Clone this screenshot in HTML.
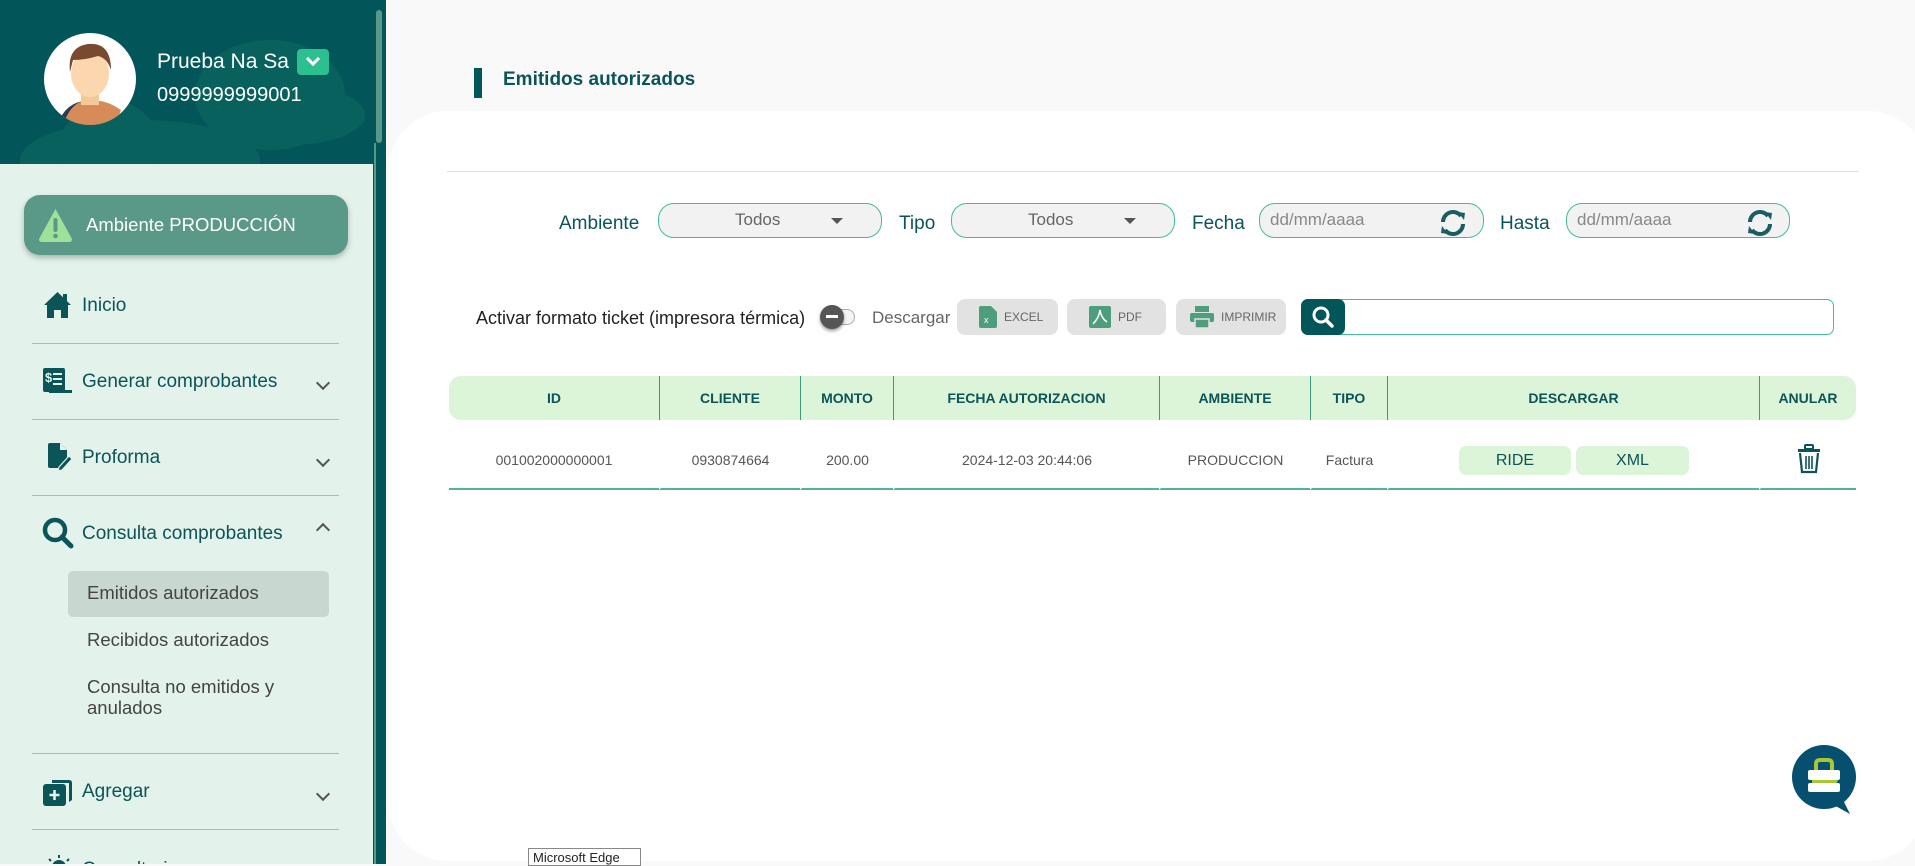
<!DOCTYPE html>
<html><head><meta charset="utf-8"><style>
*{box-sizing:border-box;margin:0;padding:0}
body{width:1915px;height:864px;overflow:hidden;background:#f9f9f9;font-family:"Liberation Sans",sans-serif;position:relative}
.a{position:absolute}
#side{left:0;top:0;width:373px;height:864px;background:#e3f2eb;overflow:hidden}
#head{left:0;top:0;width:373px;height:164px;background:#02565a;overflow:hidden}
.nav{position:absolute;left:82px;font-size:19px;color:#0b5458}
.div{position:absolute;left:32px;width:307px;height:1px;background:#9fc2b5}
.chev{position:absolute;left:318px;width:10px;height:10px;border-right:2px solid #555;border-bottom:2px solid #555;transform:rotate(45deg)}
.sub{position:absolute;left:87px;font-size:18.5px;color:#444}
.lbl{position:absolute;font-size:19px;color:#0b5458;top:213px}
.sel{position:absolute;top:203px;height:35px;border:1px solid #3fbf91;border-radius:16px;background:#f2f2f2;font-size:17px;color:#666}
.btn{position:absolute;top:299px;height:36px;background:#e2e2e2;border-radius:8px;font-size:12px;color:#666;display:flex;align-items:center;gap:7px;padding-left:22px}
th{background:#dcf5d8;color:#0b5458;font-size:14px;font-weight:bold;height:44px;border-left:1px solid #3f9a7d}
td{font-size:14px;color:#555;text-align:center;height:70px;padding-top:12px;border-bottom:2px solid #4fb68f;border-left:2px solid #fff}
</style></head><body>
<div id="side" class="a">
 <div id="head" class="a">
  <svg class="a" style="left:0;top:0" width="373" height="164"><g fill="#0f6a60" opacity=".55"><ellipse cx="140" cy="160" rx="120" ry="40"/><circle cx="110" cy="150" r="50"/><ellipse cx="270" cy="95" rx="75" ry="55"/><ellipse cx="290" cy="115" rx="75" ry="30"/></g></svg>
  <svg class="a" style="left:43px;top:32px" width="94" height="94" viewBox="0 0 94 94"><clipPath id="c"><circle cx="47" cy="47" r="46"/></clipPath><circle cx="47" cy="47" r="46" fill="#fff"/><g clip-path="url(#c)"><path d="M15 94 Q20 70 47 68 Q74 70 80 94Z" fill="#2b3a55"/><path d="M22 88 Q30 68 47 68 Q64 68 78 78 L72 94 L28 94Z" fill="#d68b58"/><rect x="38" y="55" width="18" height="18" fill="#f4c99a"/><ellipse cx="47" cy="42" rx="19" ry="23" fill="#fbd6ae"/><path d="M27 40 Q24 15 45 12 Q68 10 68 38 Q64 26 55 24 Q42 28 30 28Z" fill="#7a4a30"/></g></svg>
  <div class="a" style="left:157px;top:50px;color:#fff;font-size:21px">Prueba Na Sa</div>
  <div class="a" style="left:297px;top:49px;width:32px;height:26px;background:#2dc08f;border-radius:4px"><div class="a" style="left:11px;top:5px;width:10px;height:10px;border-right:3px solid #fff;border-bottom:3px solid #fff;transform:rotate(45deg)"></div></div>
  <div class="a" style="left:157px;top:84px;color:#fff;font-size:20px">0999999999001</div>
 </div>
 <div class="a" style="left:24px;top:195px;width:324px;height:60px;background:#5a9987;border-radius:16px;box-shadow:0 3px 6px rgba(0,0,0,.25)"></div>
 <svg class="a" style="left:37px;top:207px" width="37" height="36" viewBox="0 0 37 36"><path d="M18.5 2 L35 32 Q35 35 32 35 H5 Q2 35 2 32Z" fill="#9fe09a"/><rect x="16.5" y="11" width="4" height="14" rx="2" fill="#5a9987"/><circle cx="18.5" cy="29" r="2.3" fill="#5a9987"/></svg>
 <div class="a" style="left:86px;top:214px;color:#fff;font-size:18.5px">Ambiente PRODUCCIÓN</div>
 <svg class="a" style="left:43px;top:291px" width="29" height="28" viewBox="0 0 29 28"><path d="M14.5 1 L28 14 L25 14 L25 27 L18 27 L18 19 L11 19 L11 27 L4 27 L4 14 L1 14Z" fill="#0b5458"/><rect x="20" y="3" width="4" height="7" fill="#0b5458"/></svg>
 <div class="nav" style="top:295px">Inicio</div>
 <div class="div" style="top:343px"></div>
 <svg class="a" style="left:43px;top:368px" width="30" height="26" viewBox="0 0 30 26"><rect x="0" y="0" width="22" height="24" rx="2" fill="#0b5458"/><rect x="6" y="22" width="23" height="3" fill="#0b5458"/><text x="2" y="14" fill="#e3f2eb" font-size="13" font-weight="bold" font-family="Liberation Sans">$</text><rect x="10" y="5" width="9" height="2" fill="#e3f2eb"/><rect x="10" y="10" width="9" height="2" fill="#e3f2eb"/><rect x="10" y="15" width="9" height="2" fill="#e3f2eb"/></svg>
 <div class="nav" style="top:371px">Generar comprobantes</div><div class="chev" style="top:378px"></div>
 <div class="div" style="top:419px"></div>
 <svg class="a" style="left:47px;top:443px" width="26" height="28" viewBox="0 0 26 28"><path d="M1 2 Q1 0 3 0 H13 L20 7 V16 L12 25 H3 Q1 25 1 23Z" fill="#0b5458"/><path d="M13 0 V7 H20" fill="#e3f2eb"/><path d="M12 24 L22 13 L25 16 L15 27 L11 28Z" fill="#0b5458" stroke="#e3f2eb" stroke-width="1.2"/></svg>
 <div class="nav" style="top:447px">Proforma</div><div class="chev" style="top:455px"></div>
 <div class="div" style="top:495px"></div>
 <svg class="a" style="left:42px;top:517px" width="32" height="32" viewBox="0 0 32 32"><circle cx="13" cy="13" r="10" fill="none" stroke="#0b5458" stroke-width="4.5"/><path d="M20 20 L29 29" stroke="#0b5458" stroke-width="5" stroke-linecap="round"/></svg>
 <div class="nav" style="top:523px">Consulta comprobantes</div><div class="a" style="left:318px;top:525px;width:10px;height:10px;border-left:2px solid #555;border-top:2px solid #555;transform:rotate(45deg)"></div>
 <div class="a" style="left:68px;top:571px;width:261px;height:46px;background:#c8d7cf;border-radius:5px"></div>
 <div class="sub" style="top:582px">Emitidos autorizados</div>
 <div class="sub" style="top:629px">Recibidos autorizados</div>
 <div class="sub" style="top:676px;line-height:21px">Consulta no emitidos y<br>anulados</div>
 <div class="div" style="top:753px"></div>
 <svg class="a" style="left:43px;top:778px" width="30" height="28" viewBox="0 0 30 28"><path d="M9 2 H26 Q29 2 29 5 V22 L26 24 V5 H9Z" fill="#0b5458"/><rect x="0" y="6" width="23" height="22" rx="3" fill="#0b5458"/><path d="M11.5 12 V22 M6.5 17 H16.5" stroke="#e3f2eb" stroke-width="2.6"/></svg>
 <div class="nav" style="top:781px">Agregar</div><div class="chev" style="top:789px"></div>
 <div class="div" style="top:829px"></div>
 <svg class="a" style="left:46px;top:853px" width="26" height="14"><circle cx="13" cy="14" r="7" fill="#0b5458"/><path d="M13 2 V5 M3 6 L5 8 M23 6 L21 8" stroke="#0b5458" stroke-width="2"/></svg>
 <div class="nav" style="top:859px">Consultorios</div>
</div>
<div class="a" style="left:373px;top:0;width:13px;height:864px;background:#02565a"></div>
<div class="a" style="left:376px;top:10px;width:6px;height:133px;background:#5a9987;border-radius:3px"></div>
<div class="a" style="left:374px;top:143px;width:2px;height:721px;background:#5a9987"></div>

<div class="a" style="left:388px;top:111px;width:1540px;height:750px;background:#fff;border-radius:60px"></div>
<div class="a" style="left:474px;top:68px;width:8px;height:30px;background:#02565a"></div>
<div class="a" style="left:503px;top:69px;font-size:19px;font-weight:bold;color:#0b5458">Emitidos autorizados</div>
<div class="a" style="left:447px;top:171px;width:1412px;height:1px;background:#ddd"></div>

<div class="lbl" style="left:559px">Ambiente</div>
<div class="sel" style="left:658px;width:224px"><span class="a" style="left:76px;top:6px">Todos</span><span class="a" style="left:172px;top:14px;border:6px solid transparent;border-top:6px solid #555;border-bottom:0"></span></div>
<div class="lbl" style="left:899px">Tipo</div>
<div class="sel" style="left:951px;width:224px"><span class="a" style="left:76px;top:6px">Todos</span><span class="a" style="left:172px;top:14px;border:6px solid transparent;border-top:6px solid #555;border-bottom:0"></span></div>
<div class="lbl" style="left:1192px">Fecha</div>
<div class="sel" style="left:1259px;width:225px"><span class="a" style="left:10px;top:6px;color:#888">dd/mm/aaaa</span></div>
<div class="lbl" style="left:1500px">Hasta</div>
<div class="sel" style="left:1566px;width:224px"><span class="a" style="left:10px;top:6px;color:#888">dd/mm/aaaa</span></div>
<svg class="a" style="left:1438px;top:208px" width="30" height="30" viewBox="0 0 30 30"><g fill="none" stroke="#1a5d62" stroke-width="4"><path d="M5 14 A10 10 0 0 1 23 8"/><path d="M25 16 A10 10 0 0 1 7 22"/></g><path d="M20 4 L27 5 L26 12Z M10 26 L3 25 L4 18Z" fill="#1a5d62"/></svg>
<svg class="a" style="left:1745px;top:208px" width="30" height="30" viewBox="0 0 30 30"><g fill="none" stroke="#1a5d62" stroke-width="4"><path d="M5 14 A10 10 0 0 1 23 8"/><path d="M25 16 A10 10 0 0 1 7 22"/></g><path d="M20 4 L27 5 L26 12Z M10 26 L3 25 L4 18Z" fill="#1a5d62"/></svg>

<div class="a" style="left:476px;top:308px;font-size:18px;color:#222">Activar formato ticket (impresora térmica)</div>
<div class="a" style="left:825px;top:309px;width:30px;height:16px;border:1px solid #aaa;border-radius:8px;background:#f4f4f4"></div>
<div class="a" style="left:820px;top:305px;width:24px;height:24px;border-radius:50%;background:#555;box-shadow:0 2px 3px rgba(0,0,0,.4)"><div class="a" style="left:6px;top:10px;width:12px;height:3px;background:#fff"></div></div>
<div class="a" style="left:872px;top:308px;font-size:17px;color:#666">Descargar</div>
<div class="btn" style="left:957px;width:101px"><svg width="18" height="22"><path d="M0 2 Q0 0 2 0 H12 L18 6 V20 Q18 22 16 22 H2 Q0 22 0 20Z" fill="#4e9e7d"/><text x="5" y="17" font-size="9" fill="#fff" font-family="Liberation Sans">x</text></svg>EXCEL</div>
<div class="btn" style="left:1067px;width:99px"><svg width="22" height="22"><rect width="22" height="22" rx="2" fill="#4e9e7d"/><path d="M4 18 Q10 12 11 4 Q12 12 18 16" stroke="#fff" stroke-width="1.5" fill="none"/></svg>PDF</div>
<div class="btn" style="left:1176px;width:110px;padding-left:14px"><svg width="24" height="22"><rect x="5" y="0" width="14" height="6" fill="#4e9e7d"/><rect x="0" y="7" width="24" height="9" rx="2" fill="#4e9e7d"/><rect x="5" y="13" width="14" height="9" fill="#4e9e7d" stroke="#e2e2e2" stroke-width="1.5"/></svg>IMPRIMIR</div>
<div class="a" style="left:1301px;top:299px;width:533px;height:36px;border:1px solid #3fbf91;border-radius:7px"></div>
<div class="a" style="left:1301px;top:299px;width:44px;height:36px;background:#02565a;border-radius:7px"><svg class="a" style="left:10px;top:6px" width="24" height="24"><circle cx="10" cy="10" r="7" fill="none" stroke="#fff" stroke-width="3"/><path d="M15 15 L21 21" stroke="#fff" stroke-width="3.5" stroke-linecap="round"/></svg></div>

<table class="a" style="left:449px;top:376px;width:1407px;border-collapse:separate;border-spacing:0">
<tr><th style="width:210px;border-left:none;border-radius:12px 0 0 12px">ID</th><th style="width:141px">CLIENTE</th><th style="width:93px">MONTO</th><th style="width:266px">FECHA AUTORIZACION</th><th style="width:151px">AMBIENTE</th><th style="width:77px">TIPO</th><th style="width:372px">DESCARGAR</th><th style="border-radius:0 12px 12px 0">ANULAR</th></tr>
<tr><td style="border-left:none">001002000000001</td><td>0930874664</td><td>200.00</td><td>2024-12-03 20:44:06</td><td>PRODUCCION</td><td>Factura</td><td><span style="display:inline-block;width:112px;height:29px;line-height:29px;background:#dcf5d8;border-radius:7px;color:#0b5458;font-size:16px;margin-right:5px">RIDE</span><span style="display:inline-block;width:113px;height:29px;line-height:29px;background:#dcf5d8;border-radius:7px;color:#0b5458;font-size:16px">XML</span></td><td><svg width="24" height="30" viewBox="0 0 24 30"><rect x="8" y="1" width="8" height="4" rx="1" fill="none" stroke="#0b5458" stroke-width="2"/><rect x="1" y="5" width="22" height="3" fill="#0b5458"/><path d="M3 9 L5 28 H19 L21 9" fill="none" stroke="#0b5458" stroke-width="2.2"/><path d="M9 12 V25 M12 12 V25 M15 12 V25" stroke="#0b5458" stroke-width="1.6"/></svg></td></tr>
</table>

<svg class="a" style="left:1792px;top:744px" width="64" height="70" viewBox="0 0 64 70"><circle cx="32" cy="33" r="32" fill="#064f6e"/><path d="M40 60 L58 70 L50 54Z" fill="#064f6e"/><path d="M24 26 V20 Q24 16 28 16 H36 Q40 16 40 20 V26" fill="none" stroke="#a7c832" stroke-width="4"/><rect x="16" y="26" width="32" height="10" rx="2" fill="#fff"/><rect x="16" y="39" width="32" height="9" rx="2" fill="#fff"/><path d="M20 36 H44 Q48 36 44 39 H20" fill="#a7c832"/></svg>
<div class="a" style="left:528px;top:848px;width:113px;height:18px;border:1px solid #888;background:#fff;font-size:13px;color:#222;padding:1px 4px">Microsoft Edge</div>
</body></html>
